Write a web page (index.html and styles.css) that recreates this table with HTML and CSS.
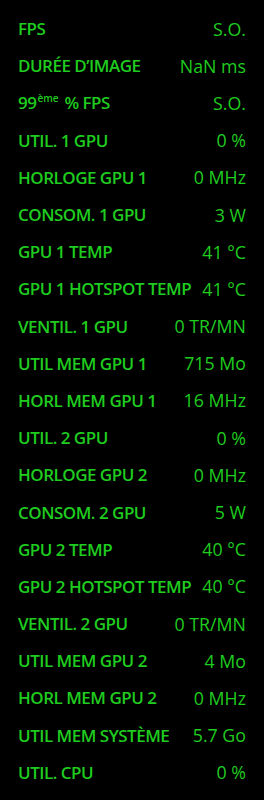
FILE: index.html
```html
<!DOCTYPE html>
<html lang="fr">
<head>
<meta charset="utf-8">
<link rel="stylesheet" href="styles.css">
</head>
<body>
<div class="stats">
  <div class="row"><span class="label">FPS</span><span class="value">S.O.</span></div>
  <div class="row"><span class="label">DURÉE D’IMAGE</span><span class="value">NaN ms</span></div>
  <div class="row"><span class="label">99<sup class="sup">ème</sup> % FPS</span><span class="value">S.O.</span></div>
  <div class="row"><span class="label">UTIL. 1 GPU</span><span class="value">0 %</span></div>
  <div class="row"><span class="label">HORLOGE GPU 1</span><span class="value">0 MHz</span></div>
  <div class="row"><span class="label">CONSOM. 1 GPU</span><span class="value">3 W</span></div>
  <div class="row"><span class="label">GPU 1 TEMP</span><span class="value">41 °C</span></div>
  <div class="row"><span class="label">GPU 1 HOTSPOT TEMP</span><span class="value">41 °C</span></div>
  <div class="row"><span class="label">VENTIL. 1 GPU</span><span class="value">0 TR/MN</span></div>
  <div class="row"><span class="label">UTIL MEM GPU 1</span><span class="value">715 Mo</span></div>
  <div class="row"><span class="label">HORL MEM GPU 1</span><span class="value">16 MHz</span></div>
  <div class="row"><span class="label">UTIL. 2 GPU</span><span class="value">0 %</span></div>
  <div class="row"><span class="label">HORLOGE GPU 2</span><span class="value">0 MHz</span></div>
  <div class="row"><span class="label">CONSOM. 2 GPU</span><span class="value">5 W</span></div>
  <div class="row"><span class="label">GPU 2 TEMP</span><span class="value">40 °C</span></div>
  <div class="row"><span class="label">GPU 2 HOTSPOT TEMP</span><span class="value">40 °C</span></div>
  <div class="row"><span class="label">VENTIL. 2 GPU</span><span class="value">0 TR/MN</span></div>
  <div class="row"><span class="label">UTIL MEM GPU 2</span><span class="value">4 Mo</span></div>
  <div class="row"><span class="label">HORL MEM GPU 2</span><span class="value">0 MHz</span></div>
  <div class="row"><span class="label">UTIL MEM SYSTÈME</span><span class="value">5.7 Go</span></div>
  <div class="row"><span class="label">UTIL. CPU</span><span class="value">0 %</span></div>
</div>
</body>
</html>
```
FILE: styles.css
```css
html, body {
  margin: 0;
  padding: 0;
  background: #000;
}
body {
  width: 264px;
  height: 800px;
  overflow: hidden;
  font-family: "Open Sans", "Noto Sans", sans-serif;
  color: #1fcc1f;
}
.stats {
  display: grid;
  grid-auto-rows: 37.2px;
  padding: 10px 18px 0 18px;
}
.row {
  display: flex;
  align-items: center;
  justify-content: space-between;
  white-space: nowrap;
}
.label {
  font-size: 17px;
  font-weight: 540;
  letter-spacing: -0.5px;
}
.value {
  font-size: 17.8px;
  font-weight: 520;
}
.sup {
  font-size: 10px;
  letter-spacing: 0;
  vertical-align: 0;
  position: relative;
  top: -7px;
  line-height: 0;
  margin: 0 2px 0 1px;
}
```
